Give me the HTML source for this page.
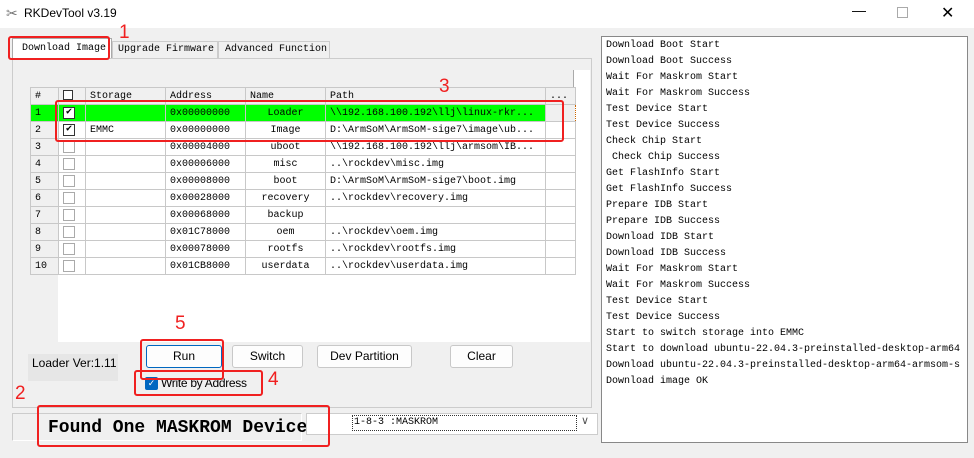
<!DOCTYPE html><html><head><style>
*{margin:0;padding:0;box-sizing:border-box}
body{width:974px;height:458px;background:#f0f0f0;position:relative;overflow:hidden;font-family:"Liberation Sans",sans-serif}
.a{position:absolute}
.m{font-family:"Liberation Mono",monospace;font-size:10px}
.red{position:absolute;border:2px solid #f02020;border-radius:3px}
.num{position:absolute;color:#f02020;font-size:19px;font-family:"Liberation Sans",sans-serif}
.btn{position:absolute;background:#fdfdfd;border:1px solid #c8c8c8;border-radius:3px;font-size:12px;text-align:center;line-height:21px;height:23px;top:345px}
table{border-collapse:collapse}
td{border:1px solid #c8c8c8;height:17px;padding:0 4px;white-space:nowrap;overflow:hidden;font-family:"Liberation Mono",monospace;font-size:10px}
.cb{display:inline-block;width:12px;height:12px;border:1px solid #333;background:#fff;font-size:10px;line-height:10px;text-align:center;vertical-align:middle}
.log div{height:16px;line-height:16px}
</style></head><body>
<div class="a" style="left:0;top:0;width:974px;height:28px;background:#fff"></div>
<div class="a" style="left:6px;top:5px;font-size:14px;color:#777">✂</div>
<div class="a" style="left:24px;top:6px;font-size:12px">RKDevTool v3.19</div>
<div class="a" style="left:852px;top:2px;font-size:14px">—</div>
<div class="a" style="left:897px;top:7px;width:11px;height:11px;border:1px solid #aaa"></div>
<div class="a" style="left:941px;top:3px;font-size:16px">✕</div>
<!-- tabs -->
<div class="a m" style="left:12px;top:38px;width:100px;height:21px;background:#fff;border:1px solid #aaa;border-bottom:none;padding:4px 0 0 9px">Download Image</div>
<div class="a m" style="left:112px;top:41px;width:106px;height:18px;border:1px solid #ccc;padding:2px 0 0 5px">Upgrade Firmware</div>
<div class="a m" style="left:218px;top:41px;width:112px;height:18px;border:1px solid #ccc;padding:2px 0 0 6px">Advanced Function</div>
<div class="a" style="left:12px;top:58px;width:580px;height:350px;border:1px solid #ccc;background:#f0f0f0"></div>
<!-- grid -->
<div class="a" style="left:30px;top:70px;width:560px;height:272px;background:#fff"></div>
<div class="a" style="left:30px;top:70px;width:544px;height:17px;background:#f0f0f0;border-right:1px solid #aaa"></div>
<div class="a" style="left:30px;top:103px;width:28px;height:239px;background:#f0f0f0"></div>
<table class="a" style="left:30px;top:87px;table-layout:fixed;width:545px">
<colgroup><col style="width:28px"><col style="width:27px"><col style="width:80px"><col style="width:80px"><col style="width:80px"><col style="width:220px"><col style="width:30px"></colgroup>
<tr style="background:#f0f0f0"><td>#</td><td><span class="cb" style="width:10px;height:10px"></span></td><td>Storage</td><td>Address</td><td>Name</td><td>Path</td><td>...</td></tr>
<tr style="background:#00ff00"><td>1</td><td><span class="cb">✔</span></td><td></td><td>0x00000000</td><td style="text-align:center">Loader</td><td>\\192.168.100.192\llj\linux-rkr...</td><td style="background:#f0f0f0;border:1px dotted #c60"></td></tr>
<tr><td style="background:#f0f0f0">2</td><td><span class="cb">✔</span></td><td>EMMC</td><td>0x00000000</td><td style="text-align:center">Image</td><td>D:\ArmSoM\ArmSoM-sige7\image\ub...</td><td></td></tr>
<tr><td style="background:#f0f0f0">3</td><td><span class="cb" style="border-color:#aaa"></span></td><td></td><td>0x00004000</td><td style="text-align:center">uboot</td><td>\\192.168.100.192\llj\armsom\IB...</td><td></td></tr>
<tr><td style="background:#f0f0f0">4</td><td><span class="cb" style="border-color:#aaa"></span></td><td></td><td>0x00006000</td><td style="text-align:center">misc</td><td>..\rockdev\misc.img</td><td></td></tr>
<tr><td style="background:#f0f0f0">5</td><td><span class="cb" style="border-color:#aaa"></span></td><td></td><td>0x00008000</td><td style="text-align:center">boot</td><td>D:\ArmSoM\ArmSoM-sige7\boot.img</td><td></td></tr>
<tr><td style="background:#f0f0f0">6</td><td><span class="cb" style="border-color:#aaa"></span></td><td></td><td>0x00028000</td><td style="text-align:center">recovery</td><td>..\rockdev\recovery.img</td><td></td></tr>
<tr><td style="background:#f0f0f0">7</td><td><span class="cb" style="border-color:#aaa"></span></td><td></td><td>0x00068000</td><td style="text-align:center">backup</td><td></td><td></td></tr>
<tr><td style="background:#f0f0f0">8</td><td><span class="cb" style="border-color:#aaa"></span></td><td></td><td>0x01C78000</td><td style="text-align:center">oem</td><td>..\rockdev\oem.img</td><td></td></tr>
<tr><td style="background:#f0f0f0">9</td><td><span class="cb" style="border-color:#aaa"></span></td><td></td><td>0x00078000</td><td style="text-align:center">rootfs</td><td>..\rockdev\rootfs.img</td><td></td></tr>
<tr><td style="background:#f0f0f0">10</td><td><span class="cb" style="border-color:#aaa"></span></td><td></td><td>0x01CB8000</td><td style="text-align:center">userdata</td><td>..\rockdev\userdata.img</td><td></td></tr>
</table>
<!-- buttons -->
<div class="a" style="left:28px;top:354px;width:90px;height:27px;background:#e6e6e6;font-size:12px;padding:2px 0 0 4px">Loader Ver:1.11</div>
<div class="btn" style="left:146px;width:76px;border:1px solid #0067c0">Run</div>
<div class="btn" style="left:232px;width:71px">Switch</div>
<div class="btn" style="left:317px;width:95px">Dev Partition</div>
<div class="btn" style="left:450px;width:63px">Clear</div>
<div class="a" style="left:145px;top:377px;width:13px;height:13px;background:#0067c0;border-radius:2px;color:#fff;font-size:9px;text-align:center;line-height:13px">✓</div>
<div class="a" style="left:161px;top:376px;font-size:12px;letter-spacing:-0.3px">Write by Address</div>
<!-- status -->
<div class="a" style="left:12px;top:413px;width:290px;height:28px;border:1px solid #ccc;border-right-color:#fff;border-bottom-color:#fff"></div>
<div class="a" style="left:48px;top:418px;font-family:'Liberation Mono',monospace;font-size:18px;font-weight:bold">Found One MASKROM Device</div>
<div class="a" style="left:306px;top:413px;width:292px;height:22px;background:#fff;border:1px solid #ccc"></div>
<div class="a m" style="left:352px;top:415px;width:225px;height:16px;border:1px dotted #333;padding-left:1px;line-height:14px">1-8-3 :MASKROM</div>
<div class="a" style="left:581px;top:414px;font-size:11px;color:#555">∨</div>
<!-- log -->
<div class="a log m" style="left:601px;top:36px;width:367px;height:407px;background:#fff;border:1px solid #888;padding:1px 0 0 4px;overflow:hidden;white-space:nowrap">
<div>Download Boot Start</div><div>Download Boot Success</div><div>Wait For Maskrom Start</div><div>Wait For Maskrom Success</div><div>Test Device Start</div><div>Test Device Success</div><div>Check Chip Start</div><div>&nbsp;Check Chip Success</div><div>Get FlashInfo Start</div><div>Get FlashInfo Success</div><div>Prepare IDB Start</div><div>Prepare IDB Success</div><div>Download IDB Start</div><div>Download IDB Success</div><div>Wait For Maskrom Start</div><div>Wait For Maskrom Success</div><div>Test Device Start</div><div>Test Device Success</div><div>Start to switch storage into EMMC</div><div>Start to download ubuntu-22.04.3-preinstalled-desktop-arm64</div><div>Download ubuntu-22.04.3-preinstalled-desktop-arm64-armsom-s</div><div>Download image OK</div>
</div>
<!-- annotations -->
<div class="red" style="left:8px;top:36px;width:102px;height:24px"></div>
<div class="num" style="left:119px;top:22px">1</div>
<div class="red" style="left:55px;top:100px;width:509px;height:42px"></div>
<div class="num" style="left:439px;top:76px">3</div>
<div class="red" style="left:140px;top:339px;width:84px;height:41px"></div>
<div class="num" style="left:175px;top:313px">5</div>
<div class="red" style="left:134px;top:370px;width:129px;height:26px"></div>
<div class="num" style="left:268px;top:369px">4</div>
<div class="red" style="left:37px;top:405px;width:293px;height:42px"></div>
<div class="num" style="left:15px;top:383px">2</div>
</body></html>
